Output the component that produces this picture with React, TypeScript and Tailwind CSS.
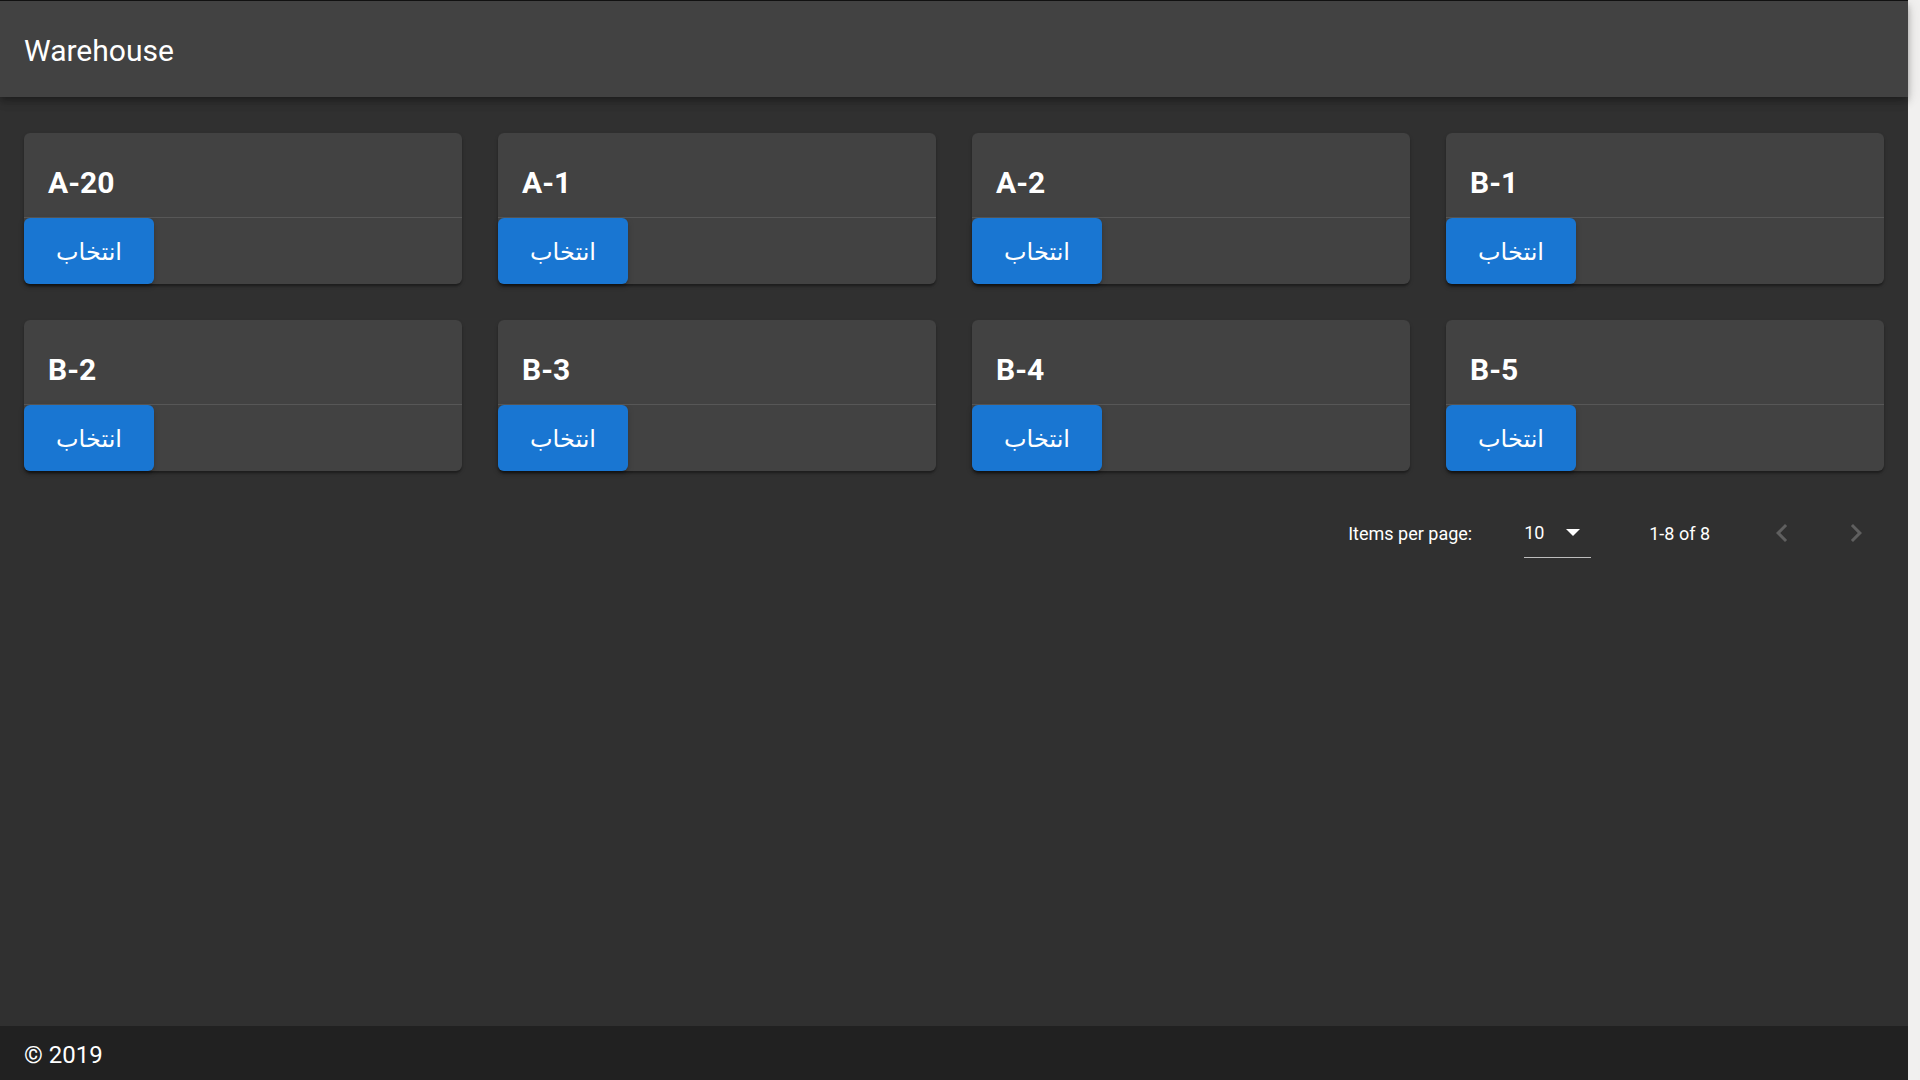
import React from "react";

const items = ["A-20", "A-1", "A-2", "B-1", "B-2", "B-3", "B-4", "B-5"];

function Card({ title }: { title: string }) {
  return (
    <div className="flex flex-col rounded-[6px] bg-[#424242] shadow-[0_3px_2px_-1px_rgba(0,0,0,0.2),0_2px_2px_0_rgba(0,0,0,0.14),0_2px_4px_0_rgba(0,0,0,0.12)]">
      <div className="pt-[32px] pb-[16px] pl-[24px] border-b border-[#575757]">
        <div className="text-[30px] leading-[36px] font-bold text-white">{title}</div>
      </div>
      <div className="flex">
        <button
          className="w-[130px] h-[66px] pt-[2px] rounded-[6px] bg-[#1976d2] text-white text-[24px] flex items-center justify-center shadow-[0_4px_2px_-3px_rgba(0,0,0,0.2),0_3px_3px_0_rgba(0,0,0,0.14),0_2px_7px_0_rgba(0,0,0,0.12)]"
          style={{ fontFamily: '"DejaVu Sans", sans-serif' }}
          dir="rtl"
        >
          انتخاب
        </button>
      </div>
    </div>
  );
}

function ChevronLeft() {
  return (
    <svg width="36" height="36" viewBox="0 0 24 24" fill="#5f5f5f">
      <path d="M15.41 7.41L14 6l-6 6 6 6 1.41-1.41L10.83 12z" />
    </svg>
  );
}

function ChevronRight() {
  return (
    <svg width="36" height="36" viewBox="0 0 24 24" fill="#5f5f5f">
      <path d="M10 6L8.59 7.41 13.17 12l-4.58 4.59L10 18l6-6z" />
    </svg>
  );
}

export default function App() {
  return (
    <div
      className="flex w-full h-screen overflow-hidden"
      style={{ fontFamily: 'Roboto, "DejaVu Sans", sans-serif' }}
    >
      <div className="flex flex-col flex-1 min-w-0 bg-[#303030] border-t border-[#141414]">
        <header className="relative z-10 h-[96px] shrink-0 bg-[#424242] flex items-center pl-[24px] pt-[4px] shadow-[0_3px_6px_-1px_rgba(0,0,0,0.2),0_6px_8px_0_rgba(0,0,0,0.14),0_2px_14px_0_rgba(0,0,0,0.12)]">
          <h1 className="text-[30px] text-white font-normal leading-none">Warehouse</h1>
        </header>
        <main className="flex-1 px-[24px] pt-[36px]">
          <div className="grid grid-cols-4 gap-[36px]">
            {items.map((t) => (
              <Card key={t} title={t} />
            ))}
          </div>
          <div className="mt-[20px] h-[84px] flex items-center justify-end mr-[-2px] text-white text-[18px]">
            <span className="mr-[52px]">Items per page:</span>
            <div className="w-[67px] h-[50px] flex items-center border-b border-[#bdbdbd]">
              <span className="flex-1">10</span>
              <svg width="14" height="8" viewBox="0 0 14 8" className="mr-[11px]">
                <path d="M0 0 L14 0 L7 7 Z" fill="#ffffff" />
              </svg>
            </div>
            <span className="ml-[58px]">1-8 of 8</span>
            <div className="ml-[42px] w-[60px] h-[60px] flex items-center justify-center">
              <ChevronLeft />
            </div>
            <div className="ml-[14px] w-[60px] h-[60px] flex items-center justify-center">
              <ChevronRight />
            </div>
          </div>
        </main>
        <footer className="h-[54px] shrink-0 bg-[#212121] flex items-center pl-[24px] pt-[3px]">
          <span className="text-[24px] text-white">© 2019</span>
        </footer>
      </div>
      <div className="w-[12px] shrink-0 bg-[#f1f0ef]" />
    </div>
  );
}
